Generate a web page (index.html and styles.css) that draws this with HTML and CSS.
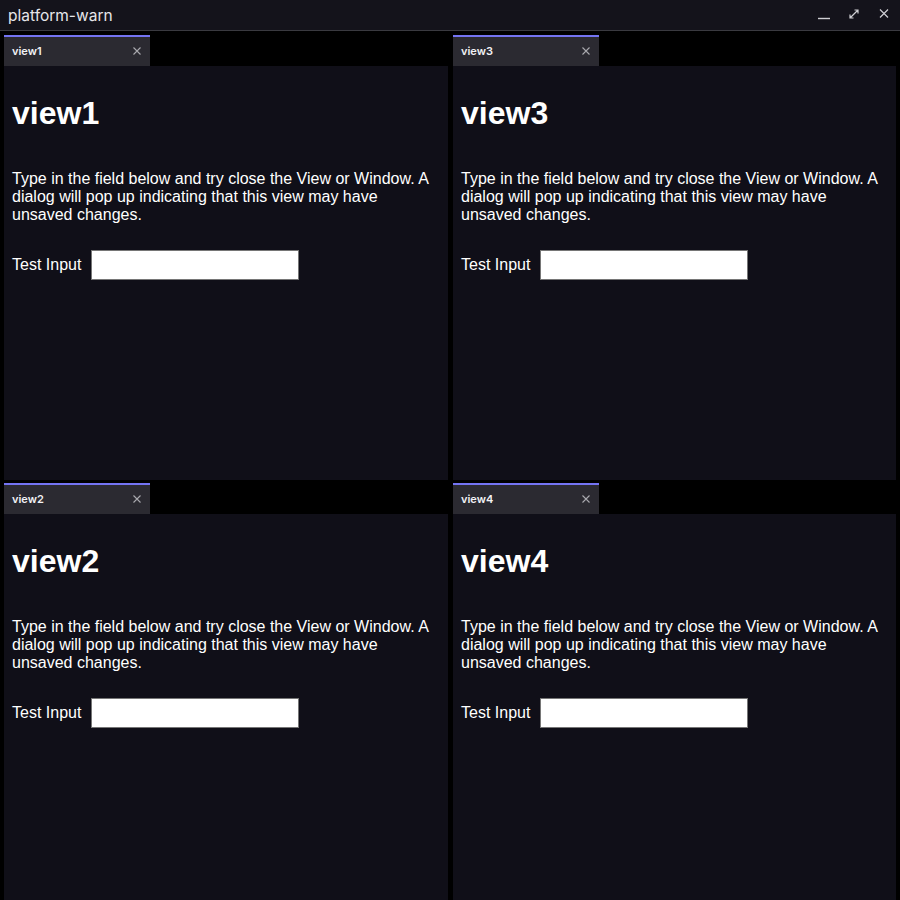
FILE: index.html
```html
<!DOCTYPE html>
<html>
<head>
<meta charset="utf-8">
<link rel="stylesheet" href="styles.css">
</head>
<body>
<div class="titlebar">
  <div class="title">platform-warn</div>
  <div class="controls">
    <svg class="ctl" width="14" height="14" viewBox="0 0 14 14"><line x1="1" y1="11.5" x2="13" y2="11.5" stroke="#cfcfd4" stroke-width="1.4"/></svg>
    <svg class="ctl" width="14" height="14" viewBox="0 0 14 14" fill="none" stroke="#cfcfd4" stroke-width="1.2"><path d="M3 11 L11 3 M7.5 3 H11 V6.5 M3 7.5 V11 H6.5"/></svg>
    <svg class="ctl" width="14" height="14" viewBox="0 0 14 14" fill="none" stroke="#cfcfd4" stroke-width="1.2"><path d="M3 2.5 L11 10.5 M11 2.5 L3 10.5"/></svg>
  </div>
</div>
<div class="grid">
  <div class="panel">
    <div class="tabstrip"><div class="tab"><span>view1</span><svg width="10" height="10" viewBox="0 0 10 10" fill="none" stroke="#a9a9ae" stroke-width="1.1"><path d="M1.5 1.5 L8.5 8.5 M8.5 1.5 L1.5 8.5"/></svg></div></div>
    <div class="content">
      <h1>view1</h1>
      <p>Type in the field below and try close the View or Window. A dialog will pop up indicating that this view may have unsaved changes.</p>
      <div class="field"><label>Test Input</label><input type="text"></div>
    </div>
  </div>
  <div class="panel">
    <div class="tabstrip"><div class="tab"><span>view3</span><svg width="10" height="10" viewBox="0 0 10 10" fill="none" stroke="#a9a9ae" stroke-width="1.1"><path d="M1.5 1.5 L8.5 8.5 M8.5 1.5 L1.5 8.5"/></svg></div></div>
    <div class="content">
      <h1>view3</h1>
      <p>Type in the field below and try close the View or Window. A dialog will pop up indicating that this view may have unsaved changes.</p>
      <div class="field"><label>Test Input</label><input type="text"></div>
    </div>
  </div>
  <div class="panel">
    <div class="tabstrip"><div class="tab"><span>view2</span><svg width="10" height="10" viewBox="0 0 10 10" fill="none" stroke="#a9a9ae" stroke-width="1.1"><path d="M1.5 1.5 L8.5 8.5 M8.5 1.5 L1.5 8.5"/></svg></div></div>
    <div class="content">
      <h1>view2</h1>
      <p>Type in the field below and try close the View or Window. A dialog will pop up indicating that this view may have unsaved changes.</p>
      <div class="field"><label>Test Input</label><input type="text"></div>
    </div>
  </div>
  <div class="panel">
    <div class="tabstrip"><div class="tab"><span>view4</span><svg width="10" height="10" viewBox="0 0 10 10" fill="none" stroke="#a9a9ae" stroke-width="1.1"><path d="M1.5 1.5 L8.5 8.5 M8.5 1.5 L1.5 8.5"/></svg></div></div>
    <div class="content">
      <h1>view4</h1>
      <p>Type in the field below and try close the View or Window. A dialog will pop up indicating that this view may have unsaved changes.</p>
      <div class="field"><label>Test Input</label><input type="text"></div>
    </div>
  </div>
</div>
</body>
</html>
```
FILE: styles.css
```css
html, body {
  margin: 0;
  padding: 0;
  width: 900px;
  height: 900px;
  overflow: hidden;
  background: #000;
}
.titlebar {
  height: 30px;
  background: #14131b;
  border-bottom: 1px solid #3a3a40;
  display: flex;
  align-items: center;
  justify-content: space-between;
  padding: 0 0 0 8px;
}
.title {
  font-family: Inter, "Noto Sans", sans-serif;
  font-size: 15.5px;
  color: #e6e6ea;
  margin-top: 1px;
}
.controls {
  display: flex;
  gap: 16px;
  padding-right: 9px;
  margin-top: -2px;
}
.ctl { display: block; }
.grid {
  display: grid;
  grid-template-columns: 444px 443px;
  grid-template-rows: 445px 445px;
  column-gap: 5px;
  row-gap: 3px;
  padding: 4px 4px 0 4px;
}
.panel {
  display: flex;
  flex-direction: column;
  background: #000;
}
.tabstrip {
  height: 31px;
  display: flex;
}
.tab {
  width: 146px;
  box-sizing: border-box;
  border-top: 2px solid #7474f2;
  background: #2b2a31;
  display: flex;
  align-items: center;
  justify-content: space-between;
  padding: 0 8px 1px 8px;
  font-family: Inter, "Noto Sans", sans-serif;
  font-size: 11px;
  font-weight: 600;
  color: #f2f2f5;
}
.content {
  flex: 1;
  background: #100f18;
  padding: 8px;
  color: #fff;
  font-family: "Liberation Sans", Arial, sans-serif;
}
h1 {
  font-size: 32px;
  font-weight: bold;
  margin: 21.44px 0 0 0;
}
p {
  font-size: 16px;
  margin: 37.44px 0 16px 0;
  line-height: 18px;
}
.field {
  display: flex;
  align-items: center;
  gap: 10px;
  font-size: 16px;
  margin-top: 26px;
}
input {
  width: 208px;
  height: 30px;
  box-sizing: border-box;
  border: 1px solid #767676;
  background: #fff;
  padding: 0;
  margin: 0;
}
```
